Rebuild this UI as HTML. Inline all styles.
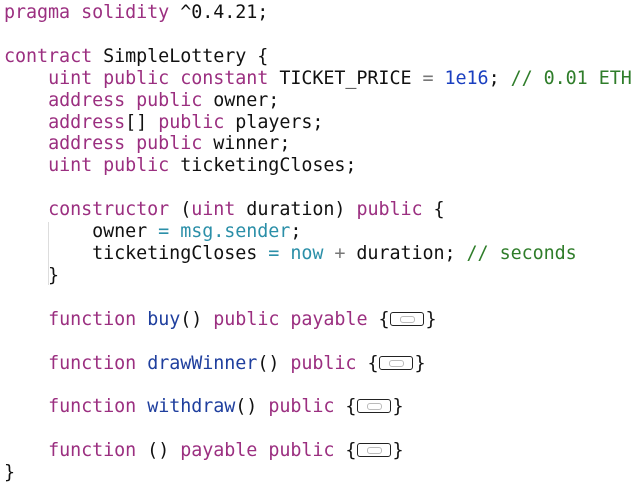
<!DOCTYPE html>
<html><head><style>
body{margin:0;background:#fff;width:638px;height:486px;overflow:hidden}
pre{margin:0;position:absolute;left:4px;top:2px;font-family:"DejaVu Sans Mono","Liberation Mono",monospace;font-size:18.4px;line-height:21.9px;color:#111;letter-spacing:-0.06px}
.k{color:#9b2f80}.f{color:#1f3f9e}.n{color:#1a3fc0}.t{color:#2b8fa8}.c{color:#2f7d2a}.o{color:#777}
.fold{display:inline-block;width:32px;height:12px;border:1.5px solid #222;border-radius:3px;vertical-align:-1px;position:relative;margin:0 1px}
.fold:after{content:"";position:absolute;left:9px;top:3px;width:13px;height:5px;border:1px solid #bbb;border-radius:3px}
.g{position:absolute;left:48px;top:222px;width:1px;height:63px;background:#ddd}
</style></head><body>
<div class="g"></div>
<pre><span class="k">pragma solidity</span> ^0.4.21;

<span class="k">contract</span> SimpleLottery {
    <span class="k">uint public constant</span> TICKET_PRICE <span class="o">=</span> <span class="n">1e16</span>; <span class="c">// 0.01 ETH</span>
    <span class="k">address public</span> owner;
    <span class="k">address</span>[] <span class="k">public</span> players;
    <span class="k">address public</span> winner;
    <span class="k">uint public</span> ticketingCloses;

    <span class="k">constructor</span> (<span class="k">uint</span> duration) <span class="k">public</span> {
        owner <span class="t">=</span> <span class="t">msg.sender</span>;
        ticketingCloses <span class="t">=</span> <span class="t">now</span> <span class="o">+</span> duration; <span class="c">// seconds</span>
    }

    <span class="k">function</span> <span class="f">buy</span>() <span class="k">public payable</span> {<span class="fold"></span>}

    <span class="k">function</span> <span class="f">drawWinner</span>() <span class="k">public</span> {<span class="fold"></span>}

    <span class="k">function</span> <span class="f">withdraw</span>() <span class="k">public</span> {<span class="fold"></span>}

    <span class="k">function</span> () <span class="k">payable public</span> {<span class="fold"></span>}
}</pre>
</body></html>
